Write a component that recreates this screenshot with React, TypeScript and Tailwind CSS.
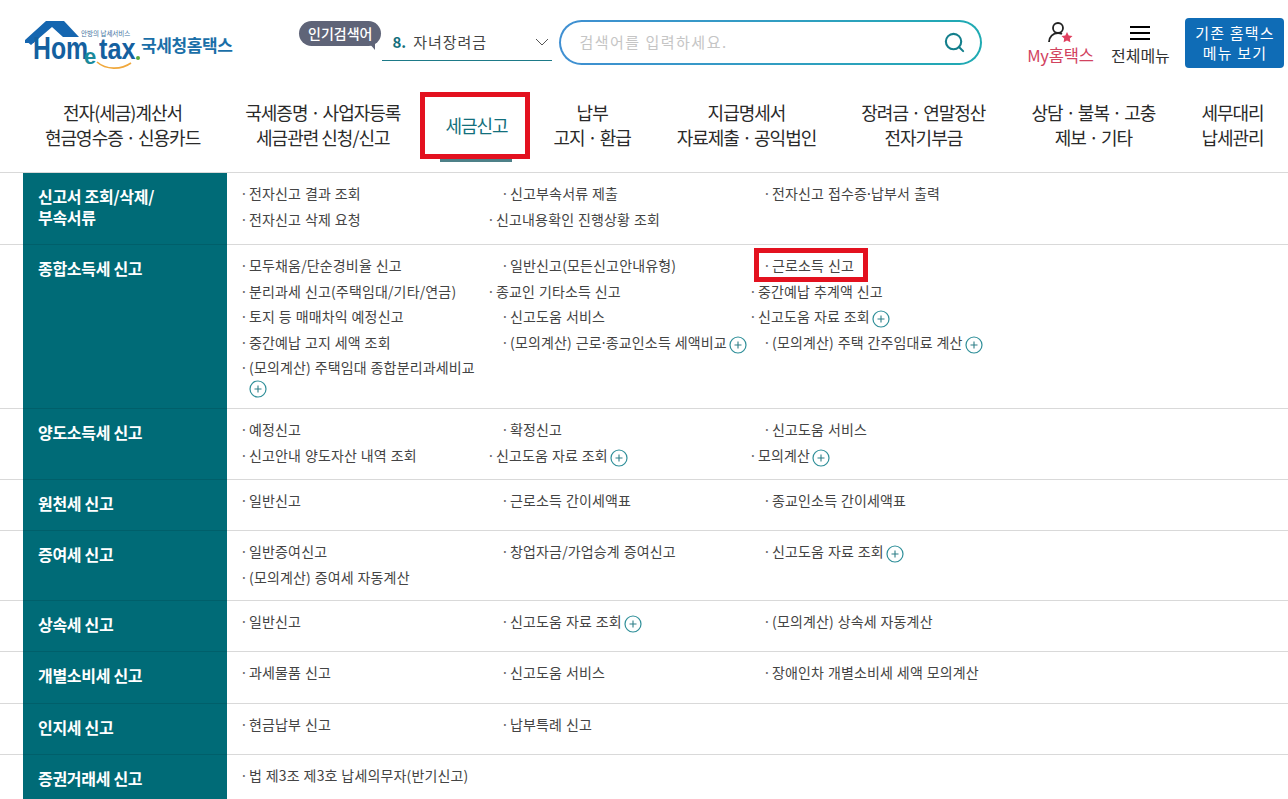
import { Fragment } from "react";
import { Search } from "lucide-react";

const font = "font-['Noto_Sans_CJK_KR','Noto_Sans',sans-serif]";
const latin = "font-['Liberation_Sans',sans-serif]";

type Item = { text: string; shift?: boolean; plus?: boolean; boxed?: boolean; wide?: boolean };
type Row = { title: string[]; h: string; items: Item[] };

const rows: Row[] = [
  {
    title: ["신고서 조회/삭제/", "부속서류"],
    h: "h-[72px]",
    items: [
      { text: "전자신고 결과 조회" },
      { text: "신고부속서류 제출" },
      { text: "전자신고 접수증·납부서 출력" },
      { text: "전자신고 삭제 요청" },
      { text: "신고내용확인 진행상황 조회", shift: true },
    ],
  },
  {
    title: ["종합소득세 신고"],
    h: "h-[164px]",
    items: [
      { text: "모두채움/단순경비율 신고" },
      { text: "일반신고(모든신고안내유형)" },
      { text: "근로소득 신고", boxed: true },
      { text: "분리과세 신고(주택임대/기타/연금)" },
      { text: "종교인 기타소득 신고", shift: true },
      { text: "중간예납 추계액 신고", shift: true },
      { text: "토지 등 매매차익 예정신고" },
      { text: "신고도움 서비스" },
      { text: "신고도움 자료 조회", shift: true, plus: true },
      { text: "중간예납 고지 세액 조회" },
      { text: "(모의계산) 근로·종교인소득 세액비교", plus: true },
      { text: "(모의계산) 주택 간주임대료 계산", plus: true },
      { text: "(모의계산) 주택임대 종합분리과세비교", plus: true, wide: true },
    ],
  },
  {
    title: ["양도소득세 신고"],
    h: "h-[71px]",
    items: [
      { text: "예정신고" },
      { text: "확정신고" },
      { text: "신고도움 서비스" },
      { text: "신고안내 양도자산 내역 조회" },
      { text: "신고도움 자료 조회", shift: true, plus: true },
      { text: "모의계산", shift: true, plus: true },
    ],
  },
  {
    title: ["원천세 신고"],
    h: "h-[51px]",
    items: [{ text: "일반신고" }, { text: "근로소득 간이세액표" }, { text: "종교인소득 간이세액표" }],
  },
  {
    title: ["증여세 신고"],
    h: "h-[70px]",
    items: [
      { text: "일반증여신고" },
      { text: "창업자금/가업승계 증여신고" },
      { text: "신고도움 자료 조회", plus: true },
      { text: "(모의계산) 증여세 자동계산" },
    ],
  },
  {
    title: ["상속세 신고"],
    h: "h-[51px]",
    items: [{ text: "일반신고" }, { text: "신고도움 자료 조회", plus: true }, { text: "(모의계산) 상속세 자동계산" }],
  },
  {
    title: ["개별소비세 신고"],
    h: "h-[52px]",
    items: [{ text: "과세물품 신고" }, { text: "신고도움 서비스" }, { text: "장애인차 개별소비세 세액 모의계산" }],
  },
  {
    title: ["인지세 신고"],
    h: "h-[51px]",
    items: [{ text: "현금납부 신고" }, { text: "납부특례 신고" }],
  },
  {
    title: ["증권거래세 신고"],
    h: "h-[51px]",
    items: [{ text: "법 제3조 제3호 납세의무자(반기신고)" }],
  },
];

const nav = [
  { lines: ["전자(세금)계산서", "현금영수증 · 신용카드"], w: "" },
  { lines: ["국세증명 · 사업자등록", "세금관련 신청/신고"], w: "" },
  { lines: ["세금신고"], w: "" },
  { lines: ["납부", "고지 · 환급"], w: "w-[79px]" },
  { lines: ["지급명세서", "자료제출 · 공익법인"], w: "" },
  { lines: ["장려금 · 연말정산", "전자기부금"], w: "" },
  { lines: ["상담 · 불복 · 고충", "제보 · 기타"], w: "w-[126px]" },
  { lines: ["세무대리", "납세관리"], w: "" },
];

function PlusIcon({ className = "" }: { className?: string }) {
  return (
    <svg width="18" height="18" viewBox="0 0 18 18" fill="none" className={className}>
      <circle cx="9" cy="9" r="8" stroke="#2f8f99" strokeWidth="1.2" />
      <path d="M5.5 9h7M9 5.5v7" stroke="#2f7f88" strokeWidth="1.1" />
    </svg>
  );
}

// the dots inside a label sit tight against their neighbours
function Label({ text }: { text: string }) {
  const parts = text.split("·");
  return (
    <>
      {parts.map((p, i) => (
        <Fragment key={i}>
          {i > 0 && <span className="-mx-[2px]">·</span>}
          {p}
        </Fragment>
      ))}
    </>
  );
}

function Logo() {
  return (
    <div className="relative w-[210px] h-[52px] ml-[25px] -mt-[1px] shrink-0">
      <svg width="80" height="30" viewBox="0 0 80 30" className="absolute left-0 top-[3px]">
        <path d="M0 20 L21 1 H39 L54 17 H38 L27 7 L6 25 Z" fill="#1566b0" />
        <path d="M0 20h9v3H0z" fill="#1566b0" />
      </svg>
      <span className={`absolute left-[8px] top-[14px] origin-left scale-x-[0.8] text-[31px] leading-[36px] font-bold text-[#14609f] ${latin}`}>
        Hom
      </span>
      <span className={`absolute left-[59px] top-[27px] text-[22px] leading-[26px] font-bold text-[#1b8a9c] ${latin}`}>
        e
      </span>
      <span className={`absolute left-[74px] top-[14px] origin-left scale-x-[0.84] text-[30px] leading-[36px] font-bold text-[#14609f] ${latin}`}>
        tax
      </span>
      <div className="absolute left-[111px] top-[39px] w-[4px] h-[4px] rounded-full bg-[#5aa83c]" />
      <svg width="40" height="10" viewBox="0 0 40 10" fill="none" className="absolute left-[71px] top-[44px]">
        <path d="M1 1c9 8 24 8 34 1" stroke="#f0a83c" strokeWidth="1.6" />
      </svg>
      <span className={`absolute left-[56px] top-[12px] text-[6.5px] leading-[8px] text-[#3a6f9c] ${font}`}>
        안방의 납세서비스
      </span>
      <span className={`absolute left-[116px] top-[16px] text-[17px] leading-[24px] font-bold tracking-[-0.4px] text-[#1a6fa8] ${font}`}>
        국세청홈택스
      </span>
    </div>
  );
}

export default function App() {
  return (
    <div className={`w-[1288px] h-[799px] overflow-hidden bg-white ${font}`}>
      <header className="h-[172px]">
        <div className="flex items-start h-[84px] pt-[18px]">
          <Logo />
          <div className="relative ml-[64px] mt-[3px] h-[25px] px-[9px] rounded-full bg-[#5f6478] text-white text-[14px] leading-[25px] font-medium">
            인기검색어
            <div className="absolute right-[6px] top-[22px] w-0 h-0 border-l-[6px] border-l-transparent border-t-[7px] border-t-[#5f6478]" />
          </div>
          <div className="ml-[1px] mt-[6px] w-[170px] h-[37px] border-b border-[#1d7a88] flex items-center pl-[10px] text-[15px] text-[#444]">
            <span className="font-bold text-[#136f7c] mr-[7px]">8.</span>
            <span className="tracking-[1px]">자녀장려금</span>
            <svg width="14" height="8" viewBox="0 0 14 8" fill="none" className="ml-auto mr-[3px]">
              <path d="M1 1l6 6 6-6" stroke="#555" strokeWidth="1" />
            </svg>
          </div>
          <div className="ml-[7px] mt-[2px] w-[423px] h-[45px] rounded-[23px] p-[2px] bg-gradient-to-r from-[#3f8fd2] to-[#1eaab2]">
            <div className="w-full h-full rounded-[21px] bg-white flex items-center pl-[18px] pr-[14px]">
              <span className="text-[15px] text-[#c5c5c5] tracking-[1.5px]">검색어를 입력하세요.</span>
              <Search size={23} strokeWidth={2.2} className="ml-auto text-[#137f8c]" />
            </div>
          </div>
          <div className="ml-[44px] mt-[3px] w-[68px] flex flex-col items-center">
            <svg width="28" height="24" viewBox="0 0 28 24" fill="none" className="ml-[1px]">
              <circle cx="11" cy="7" r="5" stroke="#222" strokeWidth="1.8" />
              <path d="M2 21c0-5 4-9 9-9 2 0 3 .4 4 1" stroke="#222" strokeWidth="1.8" />
              <path d="M20 11l1.7 3.4 3.8.5-2.7 2.6.6 3.7-3.4-1.8-3.4 1.8.6-3.7-2.7-2.6 3.8-.5z" fill="#e0405f" />
            </svg>
            <span className="text-[16.5px] leading-[20px] tracking-[-0.2px] text-[#d2435f] whitespace-nowrap">My홈택스</span>
          </div>
          <div className="ml-[16px] mt-[3px] w-[60px] flex flex-col items-center">
            <div className="h-[24px] w-[20px] flex flex-col justify-center gap-[4px]">
              <div className="h-[2px] bg-black" />
              <div className="h-[2px] bg-black" />
              <div className="h-[2px] bg-black" />
            </div>
            <span className="text-[16px] leading-[20px] text-[#333] whitespace-nowrap">전체메뉴</span>
          </div>
          <div className="ml-[15px] w-[99px] h-[50px] rounded-[4px] bg-[#0f6cb6] text-white text-[15px] leading-[20px] tracking-[1.2px] flex flex-col items-center justify-center">
            <span>기존 홈택스</span>
            <span>메뉴 보기</span>
          </div>
        </div>
        <nav className="flex gap-[45px] pl-[45px] h-[88px] pt-[16px] text-[18px] leading-[25px] tracking-[-1px] text-[#2a2a2a] text-center whitespace-nowrap">
          {nav.map((n) =>
            n.lines.length === 1 ? (
              <div key={n.lines[0]} className="relative flex items-start pt-[13px] text-[#136f7c]">
                {n.lines[0]}
                <div className="absolute left-[-25px] right-[-22px] top-[-8px] h-[67px] border-[5px] border-[#e3111f]" />
                <div className="absolute left-[-5px] right-[-4px] top-[59px] h-[3px] bg-[#4d8088]" />
              </div>
            ) : (
              <div key={n.lines[0]} className={n.w}>
                <div>{n.lines[0]}</div>
                <div>{n.lines[1]}</div>
              </div>
            )
          )}
        </nav>
      </header>
      <div className="border-t border-[#d9d9d9]">
        {rows.map((r) => (
          <div key={r.title[0]} className={`flex ${r.h} border-b border-[#d9d9d9]`}>
            <div className="ml-[23px] w-[204px] shrink-0 bg-[#006b77] border-b border-[#005f6a] -mb-[1px] pl-[15px] pt-[13px] text-white text-[16px] leading-[21px] font-bold tracking-[-0.3px]">
              {r.title.map((t) => (
                <div key={t}>{t}</div>
              ))}
            </div>
            <div className="pl-[13px] pt-[8px] w-[1061px] grid grid-cols-[261px_262px_1fr] content-start text-[14px] leading-[25.5px] tracking-[0.15px] [word-spacing:0.5px] text-[#444]">
              {r.items.map((it) => (
                <div
                  key={it.text}
                  className={`relative ${it.shift ? "-ml-[14px]" : ""} ${it.wide ? "w-[240px] leading-[19px] pt-[3px]" : "h-[25.5px] whitespace-nowrap"}`}
                >
                  {it.boxed && (
                    <div className="absolute -left-[9px] -top-[5px] w-[114px] h-[34px] border-[5px] border-[#e3111f]" />
                  )}
                  <span className="text-[#666] mr-[1px]">·</span>
                  <Label text={it.text} />
                  {it.plus && (
                    <PlusIcon className={`inline-block align-[-6px] ${it.wide ? "ml-[9px]" : "ml-[2px]"}`} />
                  )}
                </div>
              ))}
            </div>
          </div>
        ))}
      </div>
    </div>
  );
}
